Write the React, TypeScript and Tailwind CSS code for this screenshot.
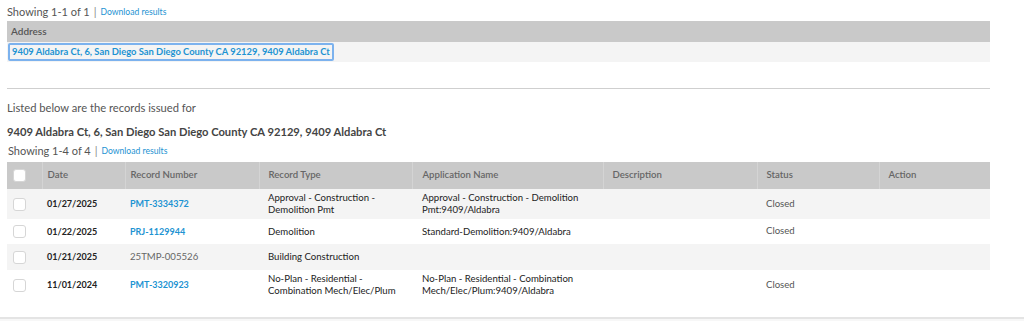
import React from "react";

const records = [
  { date: "01/27/2025", num: "PMT-3334372", link: true, type: ["Approval - Construction -", "Demolition Pmt"], app: ["Approval - Construction - Demolition", "Pmt:9409/Aldabra"], status: "Closed", h: "h-[30px]" },
  { date: "01/22/2025", num: "PRJ-1129944", link: true, type: ["Demolition"], app: ["Standard-Demolition:9409/Aldabra"], status: "Closed", h: "h-[25px]" },
  { date: "01/21/2025", num: "25TMP-005526", link: false, type: ["Building Construction"], app: [], status: "", h: "h-[26px]" },
  { date: "11/01/2024", num: "PMT-3320923", link: true, type: ["No-Plan - Residential -", "Combination Mech/Elec/Plum"], app: ["No-Plan - Residential - Combination", "Mech/Elec/Plum:9409/Aldabra"], status: "Closed", h: "h-[30px]" },
];

const ADDRESS = "9409 Aldabra Ct, 6, San Diego San Diego County CA 92129, 9409 Aldabra Ct";

function Box() {
  return <span className="block h-[13px] w-[13px] rounded-[3px] border border-[#d6d6d6] bg-white" />;
}

function Showing({ text }: { text: string }) {
  return (
    <div className="flex h-[16px] items-center text-[11px] text-[#555]">
      <span>{text}</span>
      <span className="mx-[4px] text-[11px] text-[#888]">|</span>
      <span className="text-[8.6px] text-[#1d93d2]">Download results</span>
    </div>
  );
}

export default function App() {
  return (
    <div className="relative h-[321px] w-[1024px] overflow-hidden bg-white font-['Lato',sans-serif]">
      <div className="w-[990px] pl-[7px] pt-[4px]">
        <Showing text="Showing 1-1 of 1" />

        {/* address result */}
        <div className="mt-[1px] w-[983px]">
          <div className="flex h-[21px] items-center bg-[#c9c9c9] pl-[4px] text-[10px] font-semibold text-[#555]">Address</div>
          <div className="flex h-[20px] items-center bg-[#f4f4f4] pl-[1px]">
            <span className="rounded-[2px] border-2 border-[#7cb2ee] px-[2px] py-[1px] text-[9.4px] font-bold leading-[12px] text-[#1d93d2]">{ADDRESS}</span>
          </div>
        </div>

        <div className="mt-[26px] h-px w-[983px] bg-[#cfcfcf]" />

        <p className="mt-[11px] flex h-[16px] items-center text-[11.2px] text-[#555]">Listed below are the records issued for</p>
        <p className="mt-[8px] flex h-[16px] items-center text-[11.2px] font-bold text-[#444]">{ADDRESS}</p>
        <div className="mt-[3px] pl-[1px]">
          <Showing text="Showing 1-4 of 4" />
        </div>

        {/* records */}
        <table className="mt-[3px] w-[983px] border-collapse text-[9.6px] text-[#222]">
          <thead>
            <tr className="h-[27px] bg-[#c9c9c9] text-left text-[#666]">
              <th className="w-[35px] border-r border-[#d4d4d4] pl-[6px]"><Box /></th>
              <th className="w-[83px] border-r border-[#d4d4d4] pl-[5px] font-semibold">Date</th>
              <th className="w-[134px] border-r border-[#d4d4d4] pl-[5px] font-semibold">Record Number</th>
              <th className="w-[153px] border-r border-[#d4d4d4] pl-[9px] font-semibold">Record Type</th>
              <th className="w-[191px] border-r border-[#d4d4d4] pl-[10px] font-semibold">Application Name</th>
              <th className="w-[154px] border-r border-[#d4d4d4] pl-[9px] font-semibold">Description</th>
              <th className="w-[122px] border-r border-[#d4d4d4] pl-[9px] font-semibold">Status</th>
              <th className="pl-[9px] font-semibold">Action</th>
            </tr>
          </thead>
          <tbody>
            {records.map((r, i) => (
              <tr key={r.num} className={`${r.h} ${i % 2 === 0 ? "bg-[#f4f4f4]" : "bg-white"}`}>
                <td className="pl-[6px]"><Box /></td>
                <td className="pl-[5px] text-[9px] font-bold">{r.date}</td>
                <td className={`pl-[5px] ${r.link ? "text-[9px] font-bold text-[#1d93d2]" : "text-[9.6px] text-[#666]"}`}>{r.num}</td>
                <td className="pl-[9px] leading-[12px]">{r.type.map(t => <div key={t}>{t}</div>)}</td>
                <td className="pl-[10px] leading-[12px]">{r.app.map(t => <div key={t}>{t}</div>)}</td>
                <td />
                <td className="pl-[9px] text-[#555]">{r.status}</td>
                <td />
              </tr>
            ))}
          </tbody>
        </table>
      </div>

      <div className="absolute bottom-0 left-0 h-[4px] w-full border-t-2 border-[#e4e4e4] bg-[#f7f7f7]" />
    </div>
  );
}
